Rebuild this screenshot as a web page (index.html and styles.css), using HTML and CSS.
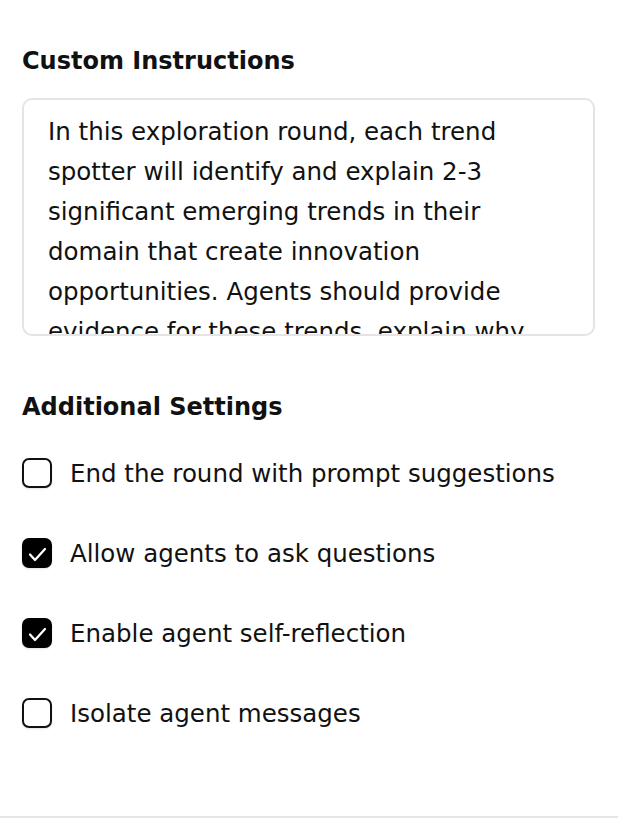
FILE: index.html
```html
<!DOCTYPE html>
<html lang="en">
<head>
<meta charset="utf-8">
<title>Round settings</title>
<link rel="stylesheet" href="styles.css">
</head>
<body>
<div class="panel">
  <h2 class="section-title">Custom Instructions</h2>
  <textarea class="instructions" readonly>In this exploration round, each trend spotter will identify and explain 2-3 significant emerging trends in their domain that create innovation opportunities. Agents should provide evidence for these trends, explain why they matter, and suggest how they might be leveraged.</textarea>

  <h2 class="section-title settings-title">Additional Settings</h2>
  <div class="options">
    <label class="option">
      <span class="box"></span>
      <span class="option-label">End the round with prompt suggestions</span>
    </label>
    <label class="option">
      <span class="box checked"><svg viewBox="0 0 30 30" width="30" height="30"><polyline points="8,16.5 13,22 23,11" fill="none" stroke="#fff" stroke-width="2.3" stroke-linecap="round" stroke-linejoin="round"/></svg></span>
      <span class="option-label">Allow agents to ask questions</span>
    </label>
    <label class="option">
      <span class="box checked"><svg viewBox="0 0 30 30" width="30" height="30"><polyline points="8,16.5 13,22 23,11" fill="none" stroke="#fff" stroke-width="2.3" stroke-linecap="round" stroke-linejoin="round"/></svg></span>
      <span class="option-label">Enable agent self-reflection</span>
    </label>
    <label class="option">
      <span class="box"></span>
      <span class="option-label">Isolate agent messages</span>
    </label>
  </div>
</div>
<div class="footer"></div>
</body>
</html>
```

FILE: styles.css
```css
html, body {
  margin: 0;
  padding: 0;
  background: #ffffff;
}

body {
  font-family: "DejaVu Sans", "Liberation Sans", sans-serif;
  color: #111111;
  width: 618px;
  height: 820px;
  overflow: hidden;
}

.panel {
  box-sizing: border-box;
  height: 816px;
  padding: 45px 23px 0 22px;
  display: flex;
  flex-direction: column;
}

.section-title {
  margin: 0;
  font-size: 24px;
  line-height: 32px;
  font-weight: 700;
  color: #111111;
}

.instructions {
  box-sizing: border-box;
  margin-top: 21px;
  width: 573px;
  height: 238px;
  padding: 12px 46px 12px 24px;
  border: 2px solid #e4e4e4;
  border-radius: 10px;
  font-family: "DejaVu Sans", "Liberation Sans", sans-serif;
  font-size: 24.5px;
  line-height: 40px;
  color: #111111;
  resize: none;
  overflow: hidden;
  outline: none;
  background: #ffffff;
}

.settings-title {
  margin-top: 55px;
}

.options {
  margin-top: 35px;
  display: flex;
  flex-direction: column;
  gap: 50px;
}

.option {
  display: flex;
  align-items: flex-start;
  gap: 18px;
  height: 30px;
}

.box {
  box-sizing: border-box;
  flex: none;
  width: 30px;
  height: 30px;
  border: 2px solid #111111;
  border-radius: 7px;
  background: #ffffff;
  box-shadow: 0 1px 2px rgba(0, 0, 0, 0.12);
  display: flex;
  align-items: center;
  justify-content: center;
}

.box.checked {
  background: #000000;
  border-color: #000000;
}

.box svg {
  display: block;
  flex: none;
}

.option-label {
  font-size: 24.5px;
  line-height: 31px;
  color: #111111;
}

.footer {
  height: 2px;
  background: #e6e6e6;
}
```
